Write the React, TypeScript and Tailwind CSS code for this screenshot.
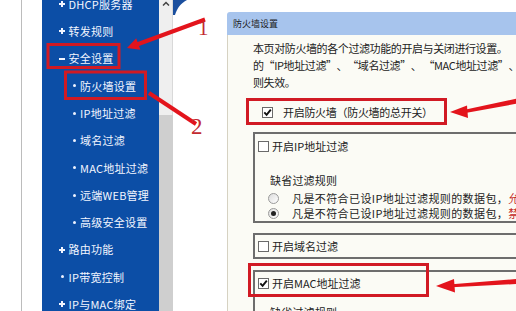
import React from "react";

const CJK = '"Noto Sans CJK SC", "Noto Sans", sans-serif';

function Check({ checked }: { checked: boolean }) {
  return (
    <span className="inline-flex w-[11px] h-[11px] shrink-0 items-center justify-center border border-[#6a6a6a] bg-white">
      {checked && (
        <svg width="9" height="9" viewBox="0 0 9 9">
          <path d="M1.3 4.4 L3.6 6.9 L7.8 1.6" stroke="#111" strokeWidth="1.9" fill="none" />
        </svg>
      )}
    </span>
  );
}

function Radio({ checked }: { checked: boolean }) {
  return (
    <span className="inline-flex w-[11px] h-[11px] shrink-0 items-center justify-center rounded-full border border-[#9a9a9a] bg-gradient-to-br from-[#dcdcdc] to-white">
      {checked && <span className="w-[5px] h-[5px] rounded-full bg-[#222]" />}
    </span>
  );
}

type Item = { t: string; lv: 1 | 2; sym?: "+" | "-" | "•" };

const items: Item[] = [
  { t: "DHCP服务器", lv: 1, sym: "+" },
  { t: "转发规则", lv: 1, sym: "+" },
  { t: "安全设置", lv: 1, sym: "-" },
  { t: "防火墙设置", lv: 2 },
  { t: "IP地址过滤", lv: 2 },
  { t: "域名过滤", lv: 2 },
  { t: "MAC地址过滤", lv: 2 },
  { t: "远端WEB管理", lv: 2 },
  { t: "高级安全设置", lv: 2 },
  { t: "路由功能", lv: 1, sym: "+" },
  { t: "IP带宽控制", lv: 1, sym: "•" },
  { t: "IP与MAC绑定", lv: 1, sym: "+" },
];

function Sym({ s }: { s: "+" | "-" | "•" }) {
  if (s === "+")
    return (
      <svg width="6" height="6" viewBox="0 0 6 6">
        <path d="M3 0 V6 M0 3 H6" stroke="#f2f5ff" strokeWidth="2" />
      </svg>
    );
  if (s === "-")
    return (
      <svg width="6" height="6" viewBox="0 0 6 6">
        <path d="M0 3 H6" stroke="#f2f5ff" strokeWidth="2" />
      </svg>
    );
  return <span className="block w-[3px] h-[3px] rounded-full bg-[#eef2ff]" />;
}

function Sidebar() {
  return (
    <div className="w-[117px] shrink-0 h-full bg-[#0c4ea6] overflow-hidden">
      <div className="-mt-[9.65px] flex flex-col">
        {items.map((it) =>
          it.lv === 1 ? (
            <div key={it.t} className="h-[27.3px] shrink-0 flex items-center pl-[17px] text-[11px] tracking-[0.25px] text-[#f3f6ff] whitespace-nowrap">
              <span className="w-[6px] flex justify-center">
                <Sym s={it.sym!} />
              </span>
              <span className="ml-[3.5px]">{it.t}</span>
            </div>
          ) : (
            <div key={it.t} className="h-[27.3px] shrink-0 flex items-center pl-[30.5px] text-[11px] tracking-[0.25px] text-[#f3f6ff] whitespace-nowrap">
              <span className="w-[3px] flex justify-center">
                <Sym s="•" />
              </span>
              <span className="ml-[4.5px]">{it.t}</span>
            </div>
          )
        )}
      </div>
    </div>
  );
}

function QO() {
  return <span className="inline-block w-[10.6px] text-right tracking-normal">“</span>;
}
function QC() {
  return <span className="inline-block w-[10.6px] text-left tracking-normal">”</span>;
}

function Panel() {
  return (
    <div className="ml-[54px] mt-[12px] flex flex-col h-[299px]">
      <div className="h-[23px] shrink-0 bg-[#a7c4ed] rounded-tl-[3px] pl-[6px] flex items-center text-[9px] text-[#1b1b1b] whitespace-nowrap">
        防火墙设置
      </div>
      <div className="flex-1 bg-[#fbfbf5] border-l border-[#d6d2c2] pl-[25px] text-[#222] whitespace-nowrap overflow-hidden">
        <div className="pt-[5px] text-[11px] tracking-[-0.4px] leading-[17px]">
          <div>本页对防火墙的各个过滤功能的开启与关闭进行设置。</div>
          <div>
            的<QO />IP地址过滤<QC />、<QO />域名过滤<QC />、 <QO />MAC地址过滤<QC />、<QO />高级安全设置<QC />才能够生效，反之，
          </div>
          <div>则失效。</div>
        </div>
        <div className="mt-[11px] h-[20px] flex items-center pl-[9px] gap-[10px] text-[11px] tracking-[-0.3px]">
          <Check checked />
          <span>开启防火墙（防火墙的总开关）</span>
        </div>

        <div className="mt-[10px] border-y-2 border-l-2 border-[#6d6d6d]">
          <div className="pt-[4px] pl-[3px] h-[20px] flex items-center gap-[3px] text-[11px]">
            <Check checked={false} />
            <span>开启IP地址过滤</span>
          </div>
          <div className="mt-[18px] pl-[15px] h-[16px] leading-[16px] text-[11px] tracking-[0.2px]">缺省过滤规则</div>
          <div className="mt-[2.5px] h-[15px] flex items-center pl-[13px] gap-[13px] text-[11px] tracking-[0.4px]">
            <Radio checked={false} />
            <span>
              凡是不符合已设IP地址过滤规则的数据包，<span className="text-[#c3261d]">允许通过本路由器</span>
            </span>
          </div>
          <div className="h-[15px] flex items-center pl-[13px] gap-[13px] text-[11px] tracking-[0.4px]">
            <Radio checked />
            <span>
              凡是不符合已设IP地址过滤规则的数据包，<span className="text-[#c3261d]">禁止通过本路由器</span>
            </span>
          </div>
        </div>

        <div className="mt-[10.5px] border-y-2 border-l-2 border-[#6d6d6d]">
          <div className="h-[22px] pl-[3px] flex items-center gap-[3px] text-[11px]">
            <Check checked={false} />
            <span>开启域名过滤</span>
          </div>
        </div>

        <div className="mt-[11px] border-t-2 border-l-2 border-[#6d6d6d]">
          <div className="pt-[3px] pl-[3px] h-[19px] flex items-center gap-[3px] text-[11px]">
            <Check checked />
            <span>开启MAC地址过滤</span>
          </div>
          <div className="mt-[13px] pl-[15px] h-[16px] leading-[16px] text-[11px] tracking-[0.2px]">缺省过滤规则</div>
        </div>
      </div>
    </div>
  );
}

function Overlay() {
  const red = "#d11a24";
  const arrow = "#e3141c";
  return (
    <>
      <svg className="absolute left-0 top-0 pointer-events-none" width="516" height="311" viewBox="0 0 516 311">
        <rect x="48" y="44.5" width="71" height="23" fill="none" stroke={red} strokeWidth="3" />
        <rect x="65.5" y="72" width="80" height="26.5" fill="none" stroke={red} strokeWidth="3" />
        <rect x="247.5" y="99.5" width="198" height="24" fill="none" stroke={red} strokeWidth="3" />
        <rect x="249.5" y="264.5" width="178" height="31" fill="none" stroke={red} strokeWidth="3" />
        <line x1="205" y1="19.5" x2="137" y2="44.5" stroke={arrow} strokeWidth="4" />
        <polygon points="127,48 140.4,49.8 136.2,38.3" fill={arrow} />
        <line x1="149" y1="93" x2="196" y2="124" stroke={arrow} strokeWidth="4" />
        <polygon points="516,98.8 516,103.8 464,113.2 463.5,110" fill={arrow} />
        <polygon points="450,112 467,105.5 468,118" fill={arrow} />
        <polygon points="516,279 516,284 452,287.3 452,284.3" fill={arrow} />
        <polygon points="436,286 454,279 455,292.5" fill={arrow} />
      </svg>
      <span
        className="absolute left-[198px] top-[16px] text-[21px] leading-[24px] text-[#c22a30]"
        style={{ fontFamily: '"Liberation Serif", serif' }}
      >
        1
      </span>
      <span
        className="absolute left-[191px] top-[114px] text-[23px] leading-[26px] text-[#c22a30]"
        style={{ fontFamily: '"Liberation Serif", serif' }}
      >
        2
      </span>
    </>
  );
}

export default function App() {
  return (
    <div className="relative w-[516px] h-[311px] overflow-hidden bg-white flex" style={{ fontFamily: CJK }}>
      <div className="w-[21px] shrink-0 h-full bg-white" />
      <div className="w-[1px] shrink-0 h-full bg-[#bcbcbc]" />
      <div className="w-[20px] shrink-0 h-full bg-white" />
      <Sidebar />
      <div className="w-[14px] shrink-0 h-full flex flex-col">
        <div className="h-[115px] bg-[#efefef] border-r border-[#d9d9d9] flex justify-center pt-[1px]">
          <svg width="8" height="5" viewBox="0 0 8 5">
            <path d="M1 4.5 L4 1.5 L7 4.5" stroke="#444" strokeWidth="1.5" fill="none" />
          </svg>
        </div>
        <div className="flex-1 bg-[#cfcfcf]" />
      </div>
      <div className="relative flex-1 min-w-0 h-full bg-white overflow-hidden">
        <svg className="absolute left-0 top-0" width="16" height="16" viewBox="0 0 16 16">
          <path d="M0 0 H14 C8 3 4 8 2 15 H0 Z" fill="#1b4f9e" />
        </svg>
        <Panel />
      </div>
      <Overlay />
    </div>
  );
}
